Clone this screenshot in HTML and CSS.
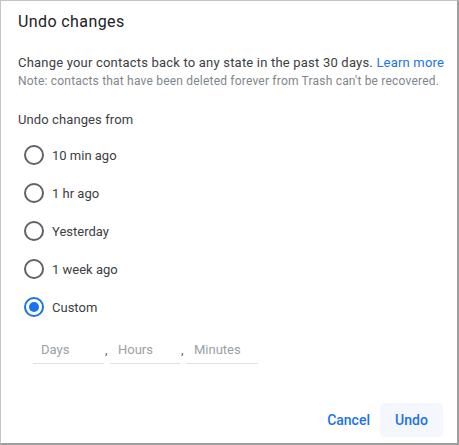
FILE: index.html
```html
<!DOCTYPE html>
<html>
<head>
<meta charset="utf-8">
<link rel="stylesheet" href="styles.css">
</head>
<body>
<div class="dialog">
  <h1 class="title">Undo changes</h1>
  <p class="desc">Change your contacts back to any state in the past 30 days. <a class="link" href="#">Learn more</a></p>
  <p class="note">Note: contacts that have been deleted forever from Trash can't be recovered.</p>
  <div class="label">Undo changes from</div>
  <div class="options">
    <label class="option"><span class="radio"></span><span class="opt-text">10 min ago</span></label>
    <label class="option"><span class="radio"></span><span class="opt-text">1 hr ago</span></label>
    <label class="option"><span class="radio"></span><span class="opt-text">Yesterday</span></label>
    <label class="option"><span class="radio"></span><span class="opt-text">1 week ago</span></label>
    <label class="option"><span class="radio checked"></span><span class="opt-text">Custom</span></label>
  </div>
  <div class="custom">
    <div class="field">Days</div><span class="comma">,</span>
    <div class="field f2">Hours</div><span class="comma">,</span>
    <div class="field f3">Minutes</div>
  </div>
  <div class="actions">
    <button class="btn cancel">Cancel</button>
    <button class="btn undo">Undo</button>
  </div>
</div>
</body>
</html>
```
FILE: styles.css
```css
html, body {
  margin: 0;
  padding: 0;
  background: #ffffff;
}
.dialog {
  box-sizing: border-box;
  width: 459px;
  height: 445px;
  border: 1px solid #c4c4c4;
  border-right: 2px solid #9e9e9e;
  border-bottom: 2px solid #9e9e9e;
  padding: 11px 14px 0 17px;
  font-family: Roboto, "Liberation Sans", sans-serif;
  color: #3c4043;
  display: flex;
  flex-direction: column;
}
.title {
  margin: 0;
  font-size: 16px;
  line-height: 20px;
  font-weight: 400;
  letter-spacing: 0.4px;
  color: #202124;
}
.desc {
  margin: 21px 0 0;
  font-size: 13px;
  line-height: 19px;
  letter-spacing: 0.2px;
  white-space: nowrap;
}
.link {
  color: #1a73e8;
  text-decoration: none;
}
.note {
  margin: 0;
  font-size: 12px;
  line-height: 19px;
  letter-spacing: 0.2px;
  color: #80868b;
  white-space: nowrap;
}
.label {
  margin-top: 19px;
  font-size: 13px;
  line-height: 20px;
  letter-spacing: 0.1px;
}
.options {
  margin-top: 6px;
  display: flex;
  flex-direction: column;
}
.option {
  height: 38px;
  display: flex;
  align-items: center;
  gap: 8px;
  padding-left: 6px;
  font-size: 13px;
}
.radio {
  box-sizing: border-box;
  width: 20px;
  height: 20px;
  border: 2px solid #5f6368;
  border-radius: 50%;
  display: flex;
  align-items: center;
  justify-content: center;
}
.radio.checked {
  border-color: #1a73e8;
}
.radio.checked::after {
  content: "";
  width: 10px;
  height: 10px;
  border-radius: 50%;
  background: #1a73e8;
}
.custom {
  margin-top: 10px;
  margin-left: 15px;
  display: flex;
  align-items: flex-end;
}
.field {
  box-sizing: border-box;
  width: 71px;
  height: 28px;
  padding-left: 8px;
  border-bottom: 1px solid #e0e0e0;
  font-size: 13px;
  line-height: 27px;
  color: #9aa0a6;
}
.f2 {
  width: 70px;
}
.f3 {
  width: 72px;
}
.comma {
  width: 6px;
  font-size: 13px;
  line-height: 27px;
  padding-bottom: 1px;
  padding-left: 1px;
  box-sizing: border-box;
  color: #5f6368;
}
.actions {
  margin-top: auto;
  margin-bottom: 6px;
  display: flex;
  justify-content: flex-end;
  align-items: center;
  gap: 2px;
}
.btn {
  font-family: Roboto, "Liberation Sans", sans-serif;
  font-size: 14px;
  font-weight: 500;
  color: #1a73e8;
  border: none;
  background: transparent;
  height: 34px;
  border-radius: 4px;
  padding: 0 8px;
}
.undo {
  background: #f4f8fe;
  padding: 0 15px;
  min-width: 63px;
}
```
